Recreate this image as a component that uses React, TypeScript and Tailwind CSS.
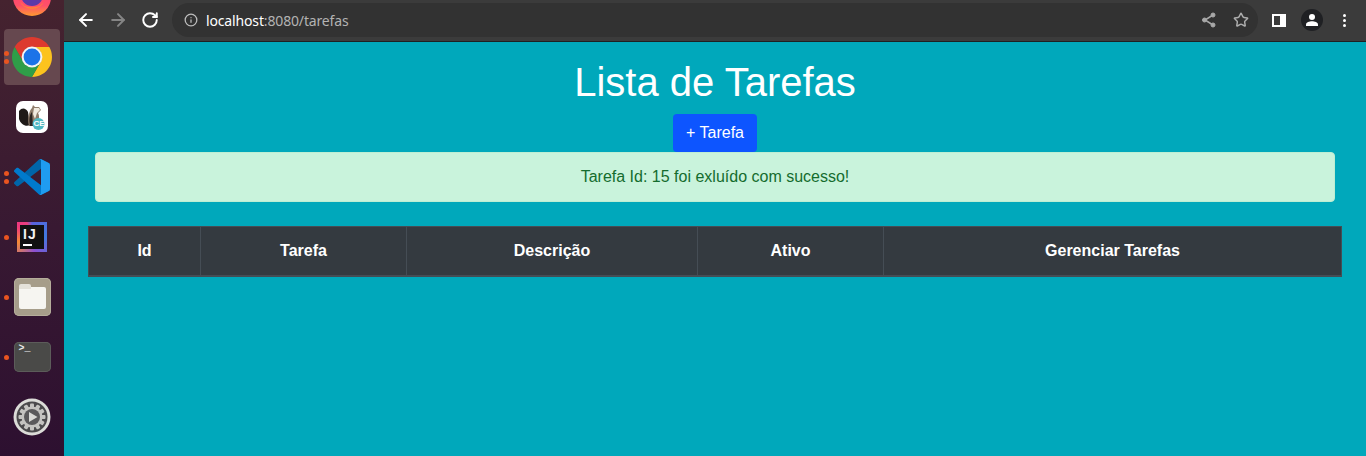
import { ArrowLeft, ArrowRight, Info, RotateCw, Star } from 'lucide-react';
import type { ReactNode } from 'react';

const ChromeLogo = () => {
  const wedge = 'M2.68 10 A20 20 0 0 1 37.32 10 L20 10 A10 10 0 0 0 11.34 25 Z';
  return (
    <svg width="40" height="40" viewBox="0 0 40 40">
      <path d={wedge} fill="#dd3a2e" />
      <path d={wedge} fill="#fcc31e" transform="rotate(120 20 20)" />
      <path d={wedge} fill="#2f9e48" transform="rotate(240 20 20)" />
      <circle cx="20" cy="20" r="10.4" fill="#f4f4f4" />
      <circle cx="20" cy="20" r="8.4" fill="#1b73e8" />
    </svg>
  );
};

const FirefoxLogo = () => (
  <svg width="38" height="38" viewBox="0 0 38 38">
    <defs>
      <linearGradient id="ff" x1="0" y1="0" x2="0" y2="1">
        <stop offset="0" stopColor="#ff3d6e" />
        <stop offset="0.72" stopColor="#ff4f6a" />
        <stop offset="1" stopColor="#ff9a30" />
      </linearGradient>
    </defs>
    <circle cx="19" cy="19" r="19" fill="url(#ff)" />
    <circle cx="19" cy="17" r="11" fill="#5b3aa8" />
    <path d="M6 22 A14 14 0 0 0 32 22 A14 12 0 0 1 6 22 Z" fill="#ff8a2e" />
  </svg>
);

const BeaverLogo = () => (
  <div className="relative h-8 w-8 rounded-[7px] bg-white">
    <svg width="32" height="32" viewBox="0 0 32 32">
      <path d="M3 10 C6 6 10 7 12 11 L14 24 C10 26 5 24 3 18 Z" fill="#1f1a18" />
      <path d="M13 25 C11 18 13 10 16 7 L17 4 L19 6 L23 6 L25 9 L22 12 C24 15 23 21 21 25 Z" fill="#8f7c6b" />
      <path d="M18 7 L23 7 L24 9 L21 12 L19 18 L17 13 Z" fill="#f0eadf" />
      <path d="M14 25 C13 20 13 14 16 11 L17 25 Z" fill="#2c2522" />
      <circle cx="22.5" cy="23" r="6" fill="#4fb9c4" />
    </svg>
    <span className="absolute left-[17.5px] top-[19px] text-[8px] font-bold leading-[8px] text-white">CE</span>
  </div>
);

const VsCodeLogo = () => (
  <svg width="36" height="36" viewBox="0 0 100 100">
    <path
      fill="#0065a9"
      d="M96.46 10.82L75.86 0.9C73.47-0.25 70.62 0.24 68.75 2.11L1.3 63.58C-0.52 65.24-0.51 68.09 1.3 69.75L6.81 74.75C8.3 76.1 10.53 76.2 12.13 74.99L93.36 13.37C96.09 11.3 100 13.25 100 16.67V16.43C100 14.03 98.62 11.84 96.46 10.8Z"
    />
    <path
      fill="#007acc"
      d="M96.46 89.18L75.86 99.1C73.47 100.25 70.62 99.76 68.75 97.89L1.3 36.42C-0.52 34.76-0.51 31.91 1.3 30.25L6.81 25.25C8.3 23.9 10.53 23.8 12.13 25.01L93.36 86.63C96.09 88.7 100 86.75 100 83.33V83.57C100 85.97 98.62 88.16 96.46 89.2Z"
    />
    <path
      fill="#1f9cf0"
      d="M75.86 99.13C73.47 100.27 70.62 99.79 68.75 97.92C71.06 100.22 75 98.59 75 95.33V4.67C75 1.41 71.06-0.22 68.75 2.08C70.62 0.21 73.47-0.27 75.86 0.87L96.46 10.78C98.62 11.82 100 14.01 100 16.41V83.59C100 85.99 98.62 88.18 96.46 89.22Z"
    />
  </svg>
);

const IdeaLogo = () => (
  <div className="h-[30px] w-[30px] bg-[conic-gradient(from_0deg,#5b62dc_0deg,#3f7be0_90deg,#8d4fd0_170deg,#f58a35_250deg,#f0377f_310deg,#e8417f_340deg,#5b62dc_360deg)] p-[3px]">
    <div className="flex h-full w-full flex-col bg-[#111111] px-[3px] pt-[2px] text-[14px] font-bold leading-[14px] text-[#f2f2f2]">
      <span className="tracking-[1px]">IJ</span>
      <span className="mt-[3px] h-[2px] w-[9px] bg-white" />
    </div>
  </div>
);

const FilesLogo = () => (
  <div className="flex h-[38px] w-[37px] items-end justify-center rounded-[5px] bg-[#a69d8a] pb-[7px] shadow-[inset_0_0_0_1px_#b5ad9b]">
    <div className="relative h-[22px] w-[27px] rounded-[2px] bg-[#f6f5f1]">
      <div className="absolute -top-[3px] left-0 h-[5px] w-[12px] rounded-t-[2px] bg-[#e4e1d9]" />
    </div>
  </div>
);

const TerminalLogo = () => (
  <div className="h-[30px] w-[37px] rounded-[5px] bg-[#4a4a48] px-[5px] pt-[1px] font-['Liberation_Mono',monospace] text-[10px] font-bold leading-[12px] text-[#e8e8e8] shadow-[inset_0_0_0_1px_#5c5c5a]">
    &gt;_
  </div>
);

const SettingsLogo = () => (
  <svg width="38" height="38" viewBox="0 0 38 38">
    <circle cx="19" cy="19" r="18.5" fill="#dcdcd8" />
    <circle cx="19" cy="19" r="15.5" fill="#4b4a4c" />
    <g fill="#c4c3c0">
      {[0, 30, 60, 90, 120, 150, 180, 210, 240, 270, 300, 330].map((a) => (
        <rect key={a} x="17" y="5.5" width="4" height="5" rx="1" transform={`rotate(${a} 19 19)`} />
      ))}
    </g>
    <circle cx="19" cy="19" r="10.5" fill="#c4c3c0" />
    <circle cx="19" cy="19" r="8" fill="#5a595b" />
    <path d="M16 14 L24.5 19 L16 24 Z" fill="#d8d8d5" />
  </svg>
);

const ShareIcon = () => (
  <svg width="16" height="16" viewBox="0 0 16 16" fill="#a8a8a8" stroke="#a8a8a8">
    <path d="M12 3 L4 8 L12 13" fill="none" strokeWidth="1.5" />
    <circle cx="12" cy="3" r="2" />
    <circle cx="3.5" cy="8" r="2" />
    <circle cx="12" cy="13" r="2" />
  </svg>
);

const DockItem = ({ dots = 0, active, children }: { dots?: number; active?: boolean; children: ReactNode }) => (
  <div className="relative flex h-[60px] w-16 shrink-0 items-center justify-center">
    {active && <div className="absolute left-[4px] top-[2px] h-[56px] w-[56px] rounded-[4px] bg-[#66484f]" />}
    {dots > 0 && (
      <div className="absolute left-[4px] top-0 flex h-full flex-col justify-center gap-[3px]">
        {Array.from({ length: dots }).map((_, i) => (
          <span key={i} className="h-[5px] w-[5px] rounded-full bg-[#e95420]" />
        ))}
      </div>
    )}
    <div className="relative">{children}</div>
  </div>
);

const columns = [
  { label: 'Id', width: 'w-[112px]' },
  { label: 'Tarefa', width: 'w-[206px]' },
  { label: 'Descrição', width: 'w-[291px]' },
  { label: 'Ativo', width: 'w-[186px]' },
  { label: 'Gerenciar Tarefas', width: '' },
];

export default function App() {
  return (
    <div className="flex h-[456px] w-[1366px] overflow-hidden font-['Liberation_Sans',sans-serif]">
      {/* Ubuntu dock */}
      <aside className="flex h-full w-16 shrink-0 flex-col overflow-hidden bg-[linear-gradient(180deg,#45232f_0%,#381932_50%,#2d1030_100%)]">
        <div className="-mt-[33px]">
          <DockItem>
            <FirefoxLogo />
          </DockItem>
          <DockItem dots={2} active>
            <ChromeLogo />
          </DockItem>
          <DockItem>
            <BeaverLogo />
          </DockItem>
          <DockItem dots={2}>
            <VsCodeLogo />
          </DockItem>
          <DockItem dots={1}>
            <IdeaLogo />
          </DockItem>
          <DockItem dots={1}>
            <FilesLogo />
          </DockItem>
          <DockItem dots={1}>
            <TerminalLogo />
          </DockItem>
          <DockItem>
            <SettingsLogo />
          </DockItem>
        </div>
      </aside>

      <div className="flex min-w-0 flex-1 flex-col bg-[#00a8bb]">
        {/* Browser toolbar */}
        <header className="flex h-[42px] shrink-0 items-center border-b border-[#1f2022] bg-[#3b3b3b] pb-px">
          <div className="flex items-center gap-[12px] pl-[12px]">
            <ArrowLeft size={20} strokeWidth={2.4} className="text-white" />
            <ArrowRight size={20} strokeWidth={2.4} className="text-[#858585]" />
            <RotateCw size={18} strokeWidth={2.6} className="ml-px text-white" />
          </div>
          <div className="ml-[13px] flex h-[34px] w-[1086px] items-center rounded-full bg-[#323232] pl-[11px] pr-[9px]">
            <Info size={14} strokeWidth={2.2} className="ml-px text-[#bdbdbd]" />
            <span className="ml-[8px] font-['Noto_Sans',sans-serif] text-[14px] tracking-[-0.15px] text-white">localhost</span>
            <span className="font-['Noto_Sans',sans-serif] text-[14px] tracking-[-0.15px] text-[#b3b3b3]">:8080/tarefas</span>
            <div className="ml-auto flex items-center gap-[16px] text-[#adadad]">
              <ShareIcon />
              <Star size={16} strokeWidth={2.2} />
            </div>
          </div>
          <div className="ml-[14px] flex items-center">
            <div className="h-[13px] w-[14px] border-[2px] border-r-[6px] border-white" />
            <div className="ml-[15px] flex h-[22px] w-[22px] items-center justify-center rounded-full bg-[#1f2023]">
              <svg width="14" height="14" viewBox="0 0 14 14" fill="#fff">
                <circle cx="7" cy="4" r="3" />
                <path d="M1 13 V11.5 C1 9.5 4.5 8.3 7 8.3 C9.5 8.3 13 9.5 13 11.5 V13 Z" />
              </svg>
            </div>
            <div className="ml-[20px] flex flex-col gap-[2px]">
              <span className="h-[3px] w-[3px] rounded-full bg-white" />
              <span className="h-[3px] w-[3px] rounded-full bg-white" />
              <span className="h-[3px] w-[3px] rounded-full bg-white" />
            </div>
          </div>
        </header>

        {/* Page */}
        <main className="flex flex-col items-center px-6">
          <h1 className="mt-[16px] text-[40px] leading-[48px] text-white">Lista de Tarefas</h1>
          <button className="mt-[8px] h-[38px] w-[84px] rounded-[4px] bg-[#0d55ff] text-[16px] text-white">+ Tarefa</button>
          <div className="h-[50px] w-[1240px] rounded-[4px] border border-[#bdeed3] bg-[#c9f3dc] text-center text-[16px] leading-[48px] text-[#146c2e]">
            Tarefa Id: 15 foi exluído com sucesso!
          </div>
          <table className="mt-[24px] w-[1254px] table-fixed border-collapse bg-[#343a40] text-white">
            <thead>
              <tr>
                {columns.map((c) => (
                  <th key={c.label} className={`h-[49px] border border-b-2 border-[#454d55] text-center text-[16px] font-bold ${c.width}`}>
                    {c.label}
                  </th>
                ))}
              </tr>
            </thead>
          </table>
        </main>
      </div>
    </div>
  );
}
